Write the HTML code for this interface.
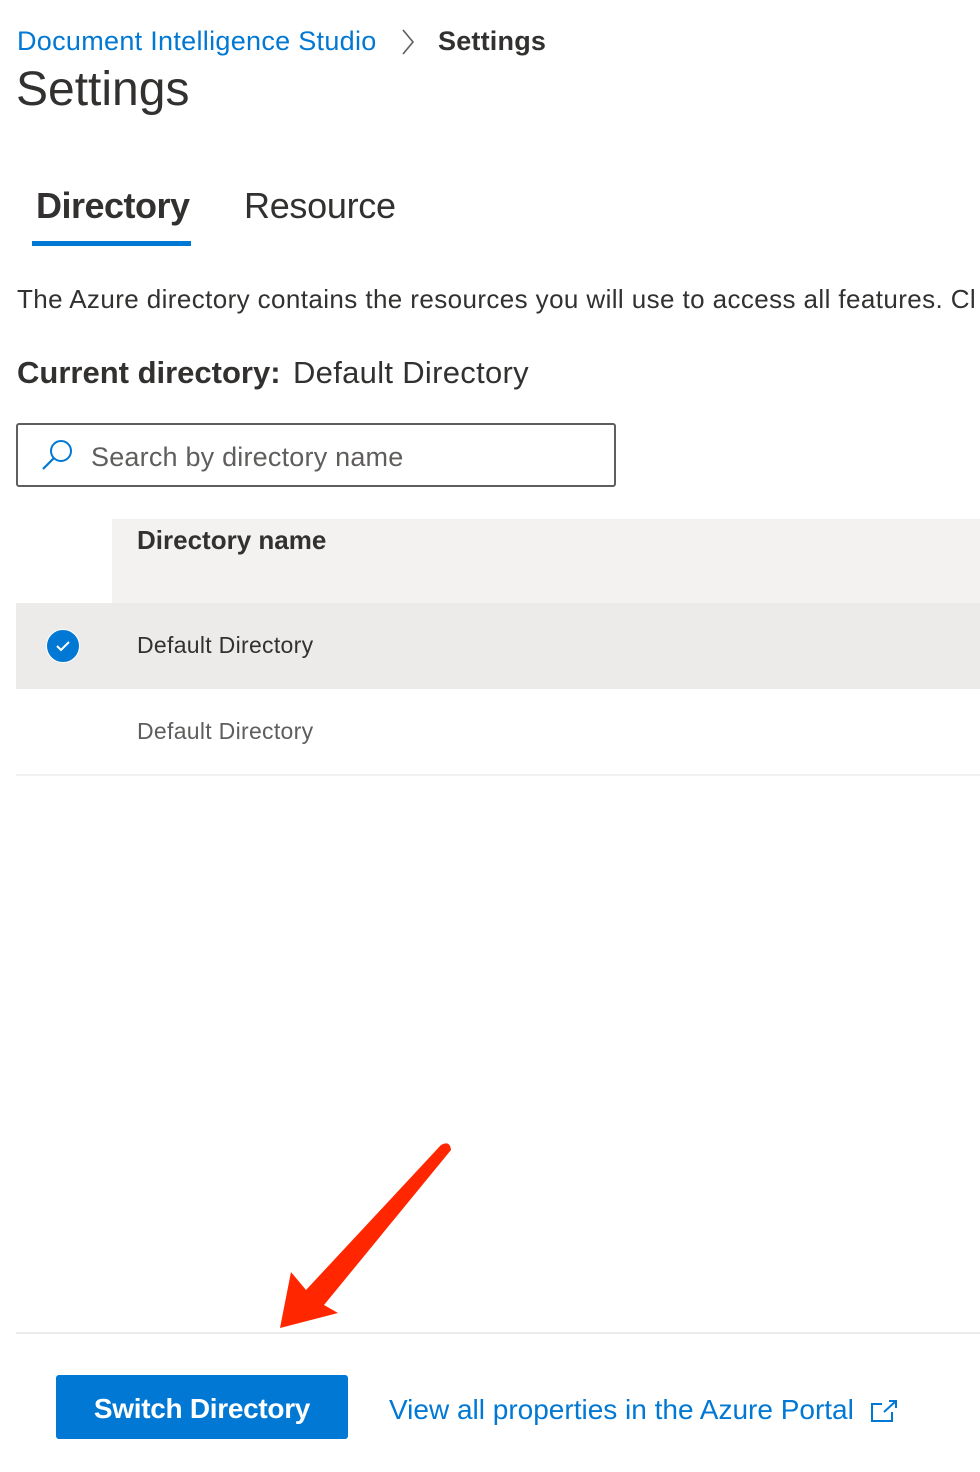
<!DOCTYPE html>
<html><head><meta charset="utf-8"><style>
body{margin:0;width:980px;height:1472px;background:#fff;position:relative;overflow:hidden;font-family:"Liberation Sans",sans-serif;color:#323130}
.a{position:absolute;white-space:nowrap}
</style></head><body>
<div class="a" style="left:17px;top:26px;font-size:27px;color:#0078d4;letter-spacing:0.3px">Document Intelligence Studio</div>
<svg class="a" style="left:400px;top:28px" width="16" height="28"><path d="M3 2 L13 14 L3 26" fill="none" stroke="#605e5c" stroke-width="1.6"/></svg>
<div class="a" style="left:438px;top:26px;font-size:27px;color:#323130;font-weight:bold;letter-spacing:0.2px">Settings</div>
<div class="a" style="left:16px;top:64px;font-size:48px;line-height:64px;height:54px;overflow:hidden;color:#323130"><div style="margin-top:-6px">Settings</div></div>
<div class="a" style="left:36px;top:185px;font-size:36px;color:#323130;font-weight:bold;letter-spacing:-0.5px">Directory</div>
<div class="a" style="left:244px;top:185px;font-size:36px;color:#323130;letter-spacing:-0.3px">Resource</div>
<div class="a" style="left:32px;top:241px;width:159px;height:5px;background:#0078d4"></div>
<div class="a" style="left:17px;top:284px;font-size:26px;color:#323130;letter-spacing:0.4px">The Azure directory contains the resources you will use to access all features. Cl</div>
<div class="a" style="left:17px;top:355px;font-size:31px;font-weight:bold;color:#323130">Current directory:</div>
<div class="a" style="left:293px;top:355px;font-size:31px;color:#323130;letter-spacing:0.3px">Default Directory</div>
<div class="a" style="left:16px;top:423px;width:596px;height:60px;border:2px solid #605e5c;border-radius:3px"></div>
<svg class="a" style="left:40px;top:438px" width="36" height="34"><circle cx="21" cy="13" r="10" fill="none" stroke="#0078d4" stroke-width="2"/><path d="M14 20 L3 31" stroke="#0078d4" stroke-width="2.2"/></svg>
<div class="a" style="left:91px;top:442px;font-size:27px;color:#605e5c;letter-spacing:0.2px">Search by directory name</div>
<div class="a" style="left:112px;top:519px;width:868px;height:84px;background:#f3f2f1"></div>
<div class="a" style="left:137px;top:525px;font-size:26px;font-weight:bold;color:#323130">Directory name</div>
<div class="a" style="left:16px;top:603px;width:964px;height:86px;background:#edebe9"></div>
<div class="a" style="left:46px;top:629px;width:32px;height:32px;border-radius:50%;background:#0078d4;border:1px solid #fff"></div>
<svg class="a" style="left:46px;top:629px" width="34" height="34"><path d="M11 17 L15 21 L23 13" fill="none" stroke="#fff" stroke-width="2"/></svg>
<div class="a" style="left:137px;top:632px;font-size:23px;color:#323130;letter-spacing:0.3px">Default Directory</div>
<div class="a" style="left:137px;top:718px;font-size:23px;color:#605e5c;letter-spacing:0.3px">Default Directory</div>
<div class="a" style="left:16px;top:774px;width:964px;height:2px;background:#f3f2f1"></div>
<div class="a" style="left:16px;top:1332px;width:964px;height:2px;background:#edebe9"></div>
<svg class="a" style="left:0;top:0" width="980" height="1472"><path d="M441 1145 Q450 1140 451 1150 L324 1305 L338 1313 L280 1328 L291 1272 L306 1290 Z" fill="#ff2600"/></svg>
<div class="a" style="left:56px;top:1375px;width:292px;height:64px;background:#0078d4;border-radius:3px"></div>
<div class="a" style="left:56px;top:1393px;width:292px;text-align:center;font-size:28px;color:#fff;font-weight:bold;letter-spacing:-0.3px">Switch Directory</div>
<div class="a" style="left:389px;top:1394px;font-size:28px;color:#0078d4">View all properties in the Azure Portal</div>
<svg class="a" style="left:870px;top:1398px" width="30" height="26"><path d="M12 6 H2 V23 H22 V14" fill="none" stroke="#0078d4" stroke-width="2"/><path d="M14 14 L26 3 M19 3 H26 V10" fill="none" stroke="#0078d4" stroke-width="2"/></svg>
</body></html>
